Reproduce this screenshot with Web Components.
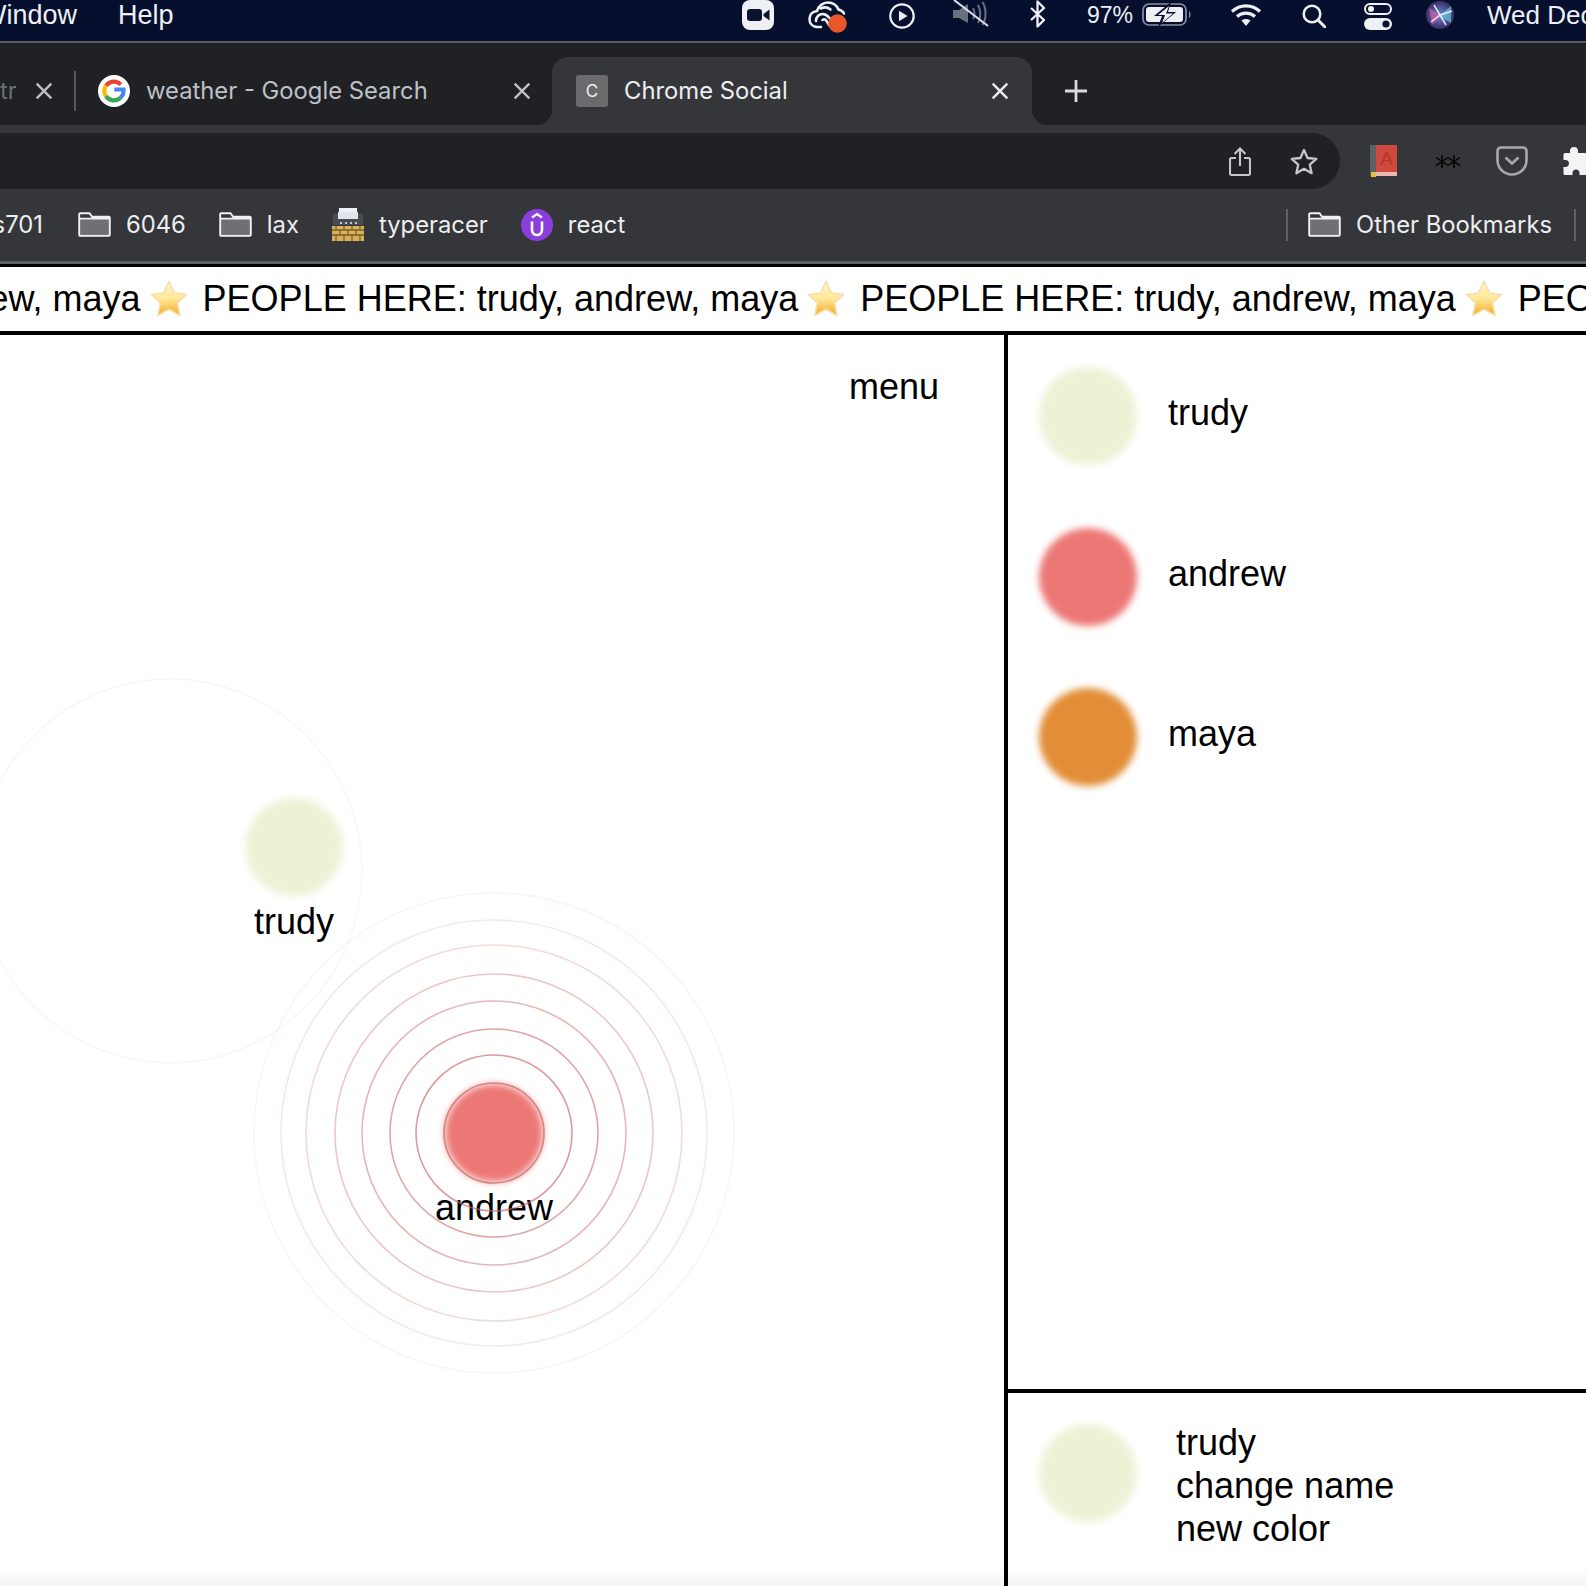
<!DOCTYPE html>
<html>
<head>
<meta charset="utf-8">
<title>Chrome Social</title>
<style>
  html, body { margin: 0; padding: 0; background: #fff; }
  body { width: 1586px; height: 1586px; overflow: hidden; font-family: "Liberation Sans", Arial, sans-serif; }
</style>
</head>
<body>
<mac-menubar></mac-menubar>
<tab-strip></tab-strip>
<browser-toolbar></browser-toolbar>
<bookmark-bar></bookmark-bar>
<people-ticker names="trudy, andrew, maya"></people-ticker>
<social-stage>
  <room-canvas slot="room">
    <room-person name="trudy" color="#edf2d6" x="294" y="512" ring-x="-124" ring-y="24" ring-r="192"></room-person>
    <room-person name="andrew" color="#ec7875" x="494" y="798" pulse></room-person>
  </room-canvas>
  <person-row slot="list" name="trudy" color="#edf2d6"></person-row>
  <person-row slot="list" name="andrew" color="#ec7875"></person-row>
  <person-row slot="list" name="maya" color="#e28e37"></person-row>
  <self-panel slot="self" name="trudy" color="#edf2d6"></self-panel>
</social-stage>

<script>
const UI_FONT = '"Inter", "Liberation Sans", sans-serif';

const folderIcon = `<svg width="33" height="25" viewBox="0 0 33 25"><path d="M2 7h29v15.500H2z" fill="#6f7073"/><path d="M1.200 2.200a1 1 0 0 1 1-1h9.300l2.600 3.600h16.700a1 1 0 0 1 1 1v17a1 1 0 0 1-1 1H2.200a1 1 0 0 1-1-1zM1.200 6.600h30.600" fill="none" stroke="#f1f1f1" stroke-width="1.900"/></svg>`;

const starEmoji = (id) => `<svg width="42" height="42" viewBox="0 0 38 38"><defs><linearGradient id="${id}" x1="0" y1="0" x2="0" y2="1"><stop offset="0" stop-color="#fff6c4"/><stop offset=".5" stop-color="#ffe99a"/><stop offset="1" stop-color="#f6a821"/></linearGradient></defs><path d="M19 3l4.800 10.500 11.200 1.400-8.300 7.700 2.300 11.300L19 28.300 8.900 33.900l2.300-11.300L3 14.900l11.200-1.400z" fill="url(#${id})" stroke="#f5dfae" stroke-width="1.400" stroke-linejoin="round"/></svg>`;

const closeIcon = (cls) => `<svg class="${cls}" width="18" height="18" viewBox="0 0 16 16"><path d="M1.500 1.500l13 13M14.500 1.500l-13 13" stroke="currentColor" stroke-width="2.100"/></svg>`;

// rounded disc with the soft edge every avatar has in the app
class ColorDot extends HTMLElement {
  constructor() {
    super();
    this.attachShadow({ mode: 'open' }).innerHTML = `
      <style>
        :host { display: block; width: 100px; height: 100px; flex: none; }
        .dot { width: 98px; height: 98px; margin: 1px; border-radius: 50%; filter: blur(3.500px); background: var(--dot, #ccc); }
      </style>
      <div class="dot"></div>`;
  }
  connectedCallback() {
    this.style.setProperty('--dot', this.getAttribute('color'));
  }
}
customElements.define('color-dot', ColorDot);

class MacMenubar extends HTMLElement {
  constructor() {
    super();
    this.attachShadow({ mode: 'open' }).innerHTML = `
      <style>
        :host { display: flex; align-items: flex-start; height: 41px; background: #060f2e; color: #eef0f6; overflow: hidden; font: 27px/30px "Liberation Sans", sans-serif; }
        .menu { margin-left: -19px; flex: none; }
        .help { margin-left: 41px; flex: none; }
        .status { margin-left: auto; display: flex; align-items: flex-start; flex: none; }
        svg { display: block; flex: none; }
        .pct { width: 45px; margin-left: 41px; font-size: 23px; line-height: 30px; flex: none; white-space: nowrap; }
        .date { width: 99px; margin-left: 33px; overflow: hidden; white-space: nowrap; flex: none; font-size: 26px; }
      </style>
      <div class="menu">Window</div>
      <div class="help">Help</div>
      <div class="status">
        <svg width="32" height="31" viewBox="0 0 32 31"><rect width="32" height="30" y="0" rx="8" fill="#eef0f4"/><rect x="5" y="9" width="15" height="12" rx="3" fill="#0b1230"/><path d="M21.500 14l6-4.500v11l-6-4.500z" fill="#0b1230"/></svg>
        <svg style="margin-left:34px" width="40" height="33" viewBox="0 0 40 33"><path d="M13 27H9.500C4.500 27 1.500 23.500 1.500 19c0-4.500 3.200-7.500 7.500-8 1.500-5 6-8.500 11-8.500 4.500 0 8.500 2.500 10.500 7 2.500.5 4.500 2 5.500 4M8 21c0-4 3-7 6.500-7 3 0 5 1.500 7 4l4 5M14.500 20c1.500-1 3-.5 4 1l3 4.500M13 8.500c3-1.500 7-1 9.500 1" fill="none" stroke="#eef0f4" stroke-width="2.600" stroke-linecap="round"/><circle cx="29.500" cy="23.500" r="9.300" fill="#e9562a"/></svg>
        <svg style="margin-left:41px;margin-top:3px" width="26" height="26" viewBox="0 0 26 26"><circle cx="13" cy="13" r="11.700" fill="none" stroke="#eef0f4" stroke-width="2.200"/><path d="M10 7.800l8.500 5.200-8.500 5.200z" fill="#eef0f4"/></svg>
        <svg style="margin-left:37px" width="38" height="28" viewBox="0 0 38 28"><path d="M1 10h6l9-6v19l-9-5H1z" fill="#6b7080"/><path d="M21 8c2 3 2 8 0 11M26 5c3 5 3 13 0 18M30.500 2c4 6 4 17 0 23" fill="none" stroke="#6b7080" stroke-width="2"/><path d="M2 0l34 26" stroke="#d8dae2" stroke-width="2.200"/></svg>
        <svg style="margin-left:39px" width="17" height="28" viewBox="0 0 17 28"><path d="M2 8l13 12-6.500 6.500V1.500L15 8 2 20" fill="none" stroke="#eef0f4" stroke-width="2.300" stroke-linejoin="round"/></svg>
        <div class="pct">97%</div>
        <svg style="margin-left:10px;margin-top:3px" width="50" height="24" viewBox="0 0 50 24"><rect x="1" y="1" width="43" height="21" rx="6" fill="none" stroke="#8b8fa3" stroke-width="1.700"/><rect x="4" y="4" width="37" height="15" rx="3" fill="#eef0f4"/><path d="M47 8c2 1 2 6 0 7z" fill="#8b8fa3"/><path d="M29 -1L12 13h8l-4 11 18-15h-8z" fill="#060f2e"/><path d="M27 3L16 12h7l-3 8 11-9.500h-7z" fill="#eef0f4"/></svg>
        <svg style="margin-left:38px;margin-top:3px" width="32" height="24" viewBox="0 0 32 24"><path d="M2 8.500c8-7.500 20-7.500 28 0M7 13.500c5-4.500 13-4.500 18 0" fill="none" stroke="#eef0f4" stroke-width="3.200"/><path d="M11.500 17.500c2.500-2 6.500-2 9 0L16 23z" fill="#eef0f4"/></svg>
        <svg style="margin-left:40px;margin-top:4px" width="24" height="24" viewBox="0 0 24 24"><circle cx="10" cy="10" r="8.300" fill="none" stroke="#eef0f4" stroke-width="2.500"/><path d="M16 16l7 7" stroke="#eef0f4" stroke-width="3" stroke-linecap="round"/></svg>
        <svg style="margin-left:38px;margin-top:3px" width="28" height="27" viewBox="0 0 28 27"><rect x="1" y="1" width="26" height="10" rx="5" fill="none" stroke="#eef0f4" stroke-width="2"/><circle cx="7" cy="6" r="3" fill="#eef0f4"/><rect y="15" width="28" height="12" rx="6" fill="#eef0f4"/><circle cx="22" cy="21" r="3.600" fill="#0b1230"/></svg>
        <svg style="margin-left:34px;margin-top:1px" width="28" height="28" viewBox="0 0 28 28"><defs><radialGradient id="siri"><stop offset="0" stop-color="#6a86d8"/><stop offset="1" stop-color="#3b2f66"/></radialGradient></defs><circle cx="14" cy="14" r="14" fill="url(#siri)"/><path d="M3 7l12 8-9 9z" fill="#d35fa8" opacity=".7"/><path d="M25 5L13 15l12 7z" fill="#5fc8e0" opacity=".7"/><path d="M14 14L8 4M14 14l12-4M14 14L5 21M14 14l6 10" stroke="#fff" stroke-width="1.500" opacity=".85"/></svg>
        <div class="date">Wed Dec</div>
      </div>`;
  }
}
customElements.define('mac-menubar', MacMenubar);

class BrowserTab extends HTMLElement {
  constructor() {
    super();
    this.attachShadow({ mode: 'open' }).innerHTML = `
      <style>
        :host { display: flex; align-items: center; box-sizing: border-box; height: 68px; padding-left: 22px; flex: none; position: relative; color: #bdc1c6; font: 23.800px/32px ${UI_FONT}; }
        :host([active]) { background: #35363a; border-radius: 16px 16px 0 0; color: #eceef0; padding-left: 24px; }
        :host([active])::before, :host([active])::after { content: ""; position: absolute; bottom: 0; width: 16px; height: 16px; }
        :host([active])::before { left: -16px; background: radial-gradient(circle at 0 0, transparent 16px, #35363a 16.500px); }
        :host([active])::after { right: -16px; background: radial-gradient(circle at 100% 0, transparent 16px, #35363a 16.500px); }
        .title { flex: 1; margin-left: 16px; white-space: nowrap; overflow: hidden; min-width: 0; }
        svg.close { flex: none; margin-right: 21px; }
        :host([active]) svg.close { margin-right: 23px; }
      </style>
      <slot name="icon"></slot>
      <div class="title"><slot></slot></div>
      ${closeIcon('close')}`;
  }
}
customElements.define('browser-tab', BrowserTab);

class TabStrip extends HTMLElement {
  constructor() {
    super();
    this.attachShadow({ mode: 'open' }).innerHTML = `
      <style>
        :host { display: flex; align-items: flex-end; box-sizing: border-box; height: 84px; background: #202124; border-top: 2px solid #5c5d60; overflow: hidden; }
        .stub { width: 75px; height: 68px; flex: none; display: flex; align-items: center; color: #bdc1c6; font: 23.800px/32px ${UI_FONT}; }
        .stub span { width: 16px; overflow: hidden; color: #6c6e72; flex: none; }
        .stub svg { margin-left: 19px; flex: none; }
        .sep { width: 2px; height: 40px; background: #55565a; flex: none; margin: 0 0 14px -1px; }
        .plus { margin: 0 0 22px 32px; flex: none; }
        browser-tab.one { width: 476px; }
        browser-tab.two { width: 480px; }
        .fav { width: 32px; height: 32px; flex: none; display: block; }
        .c { width: 32px; height: 32px; background: #6a6a6d; border-radius: 3px; color: #eee; font: 17px/32px ${UI_FONT}; text-align: center; flex: none; }
      </style>
      <div class="stub"><span>tr</span>${closeIcon('')}</div>
      <div class="sep"></div>
      <browser-tab class="one">
        <svg slot="icon" class="fav" viewBox="0 0 32 32">
          <circle cx="16" cy="16" r="16" fill="#fff"/>
          <g fill="none" stroke-width="4.200">
            <path d="M22.800 9.600A9.600 9.600 0 0 0 8 10.700" stroke="#ea4335"/>
            <path d="M8 10.700a9.600 9.600 0 0 0 0 10.600" stroke="#fbbc05"/>
            <path d="M8 21.300a9.600 9.600 0 0 0 14.500 1.400" stroke="#34a853"/>
            <path d="M22.500 22.700a9.600 9.600 0 0 0 3-8.200H16.300" stroke="#4285f4"/>
          </g>
        </svg>
        weather - Google Search
      </browser-tab>
      <browser-tab class="two" active>
        <div slot="icon" class="c">C</div>
        Chrome Social
      </browser-tab>
      <svg class="plus" width="24" height="24" viewBox="0 0 24 24"><path d="M12 1v22M1 12h22" stroke="#d8dade" stroke-width="2.800"/></svg>`;
  }
}
customElements.define('tab-strip', TabStrip);

class BrowserToolbar extends HTMLElement {
  constructor() {
    super();
    this.attachShadow({ mode: 'open' }).innerHTML = `
      <style>
        :host { display: flex; align-items: center; box-sizing: border-box; height: 65px; padding: 8px 0 1px; background: #35363a; overflow: hidden; }
        .omni { width: 1340px; height: 56px; flex: none; box-sizing: border-box; padding: 1px 22px 0 0; background: #202124; border-radius: 0 28px 28px 0; display: flex; align-items: center; justify-content: flex-end; gap: 39px; }
        svg { display: block; flex: none; }
      </style>
      <div class="omni">
        <svg width="22" height="30" viewBox="0 0 22 30"><path d="M7 11H2.500a1.500 1.500 0 0 0-1.500 1.500v14A1.500 1.500 0 0 0 2.500 28h17a1.500 1.500 0 0 0 1.500-1.500v-14a1.500 1.500 0 0 0-1.500-1.500H15M11 19V2M5.500 7L11 1.500 16.500 7" fill="none" stroke="#c4c7cb" stroke-width="2.100"/></svg>
        <svg width="28" height="28" viewBox="0 0 28 28"><path d="M14 2l3.600 8 8.700.9-6.500 5.800 1.800 8.500-7.600-4.400-7.600 4.400 1.800-8.500L1.700 10.900l8.700-.9z" fill="none" stroke="#c4c7cb" stroke-width="2.300" stroke-linejoin="round"/></svg>
      </div>
      <svg style="margin-left:30px" width="27" height="33" viewBox="0 0 27 33"><rect width="27" height="30" fill="#cf4a3e"/><rect width="6" height="30" fill="#5c5f66"/><rect x="6" y="27" width="21" height="4" fill="#e8b9ae"/><rect x="1" y="27" width="5" height="5" fill="#e6c23c"/><text x="16.500" y="20" text-anchor="middle" font-family="Liberation Sans" font-size="19" fill="#b8332c">A</text></svg>
      <svg style="margin-left:38px" width="26" height="15" viewBox="0 0 26 15"><path d="M7 1v13M1 3.500l12 8M13 3.500l-12 8M19 1v13M13 3.500l12 8M25 3.500l-12 8" stroke="#000" stroke-width="1.500"/></svg>
      <svg style="margin-left:35px" width="32" height="30" viewBox="0 0 32 30"><path d="M5 1.500h22A3.500 3.500 0 0 1 30.500 5v9c0 8.500-6.500 14.500-14.500 14.500S1.500 22.500 1.500 14V5A3.500 3.500 0 0 1 5 1.500z" fill="none" stroke="#a6a9ad" stroke-width="2.600"/><path d="M9.500 11.500L16 17.500l6.500-6" fill="none" stroke="#a6a9ad" stroke-width="2.600"/></svg>
      <svg style="margin-left:35px" width="30" height="30" viewBox="0 0 30 30"><path d="M11 1c2.500 0 4 1.800 4 3.500V7h7a1.500 1.500 0 0 1 1.500 1.500V14h2c2.500 0 4 1.600 4 3.500S29 21 26.500 21h-3v6.500A1.500 1.500 0 0 1 22 29h-5.500v-2c0-2-1.500-3.500-3.500-3.500S9.500 25 9.500 27v2H2a1.500 1.500 0 0 1-1.500-1.500V21h2c2.200 0 3.500-1.800 3.500-3.500S4.700 14 2.500 14h-2V8.500A1.500 1.500 0 0 1 2 7h5V4.500C7 2.800 8.500 1 11 1z" fill="#f4f4f4"/></svg>`;
  }
}
customElements.define('browser-toolbar', BrowserToolbar);

class BookMark extends HTMLElement {
  constructor() {
    super();
    this.attachShadow({ mode: 'open' }).innerHTML = `
      <style>
        :host { display: flex; align-items: center; gap: 15px; flex: none; color: #eceef0; font: 23.800px/32px ${UI_FONT}; white-space: nowrap; }
        ::slotted(svg) { display: block; flex: none; }
        ::slotted(span) { display: block; height: 25px; flex: none; }
      </style>
      <slot name="icon"></slot><slot></slot>`;
  }
}
customElements.define('book-mark', BookMark);

class BookmarkBar extends HTMLElement {
  constructor() {
    super();
    this.attachShadow({ mode: 'open' }).innerHTML = `
      <style>
        :host { display: flex; align-items: center; box-sizing: border-box; height: 74px; padding-bottom: 2px; background: #35363a; border-bottom: 3px solid #5f6063; overflow: hidden; gap: 33px; }
        .first { margin-left: -21px; margin-right: 2px; }
        .sep { width: 2px; height: 32px; background: #5f6063; flex: none; }
        .end { margin-left: auto; display: flex; align-items: center; gap: 20px; margin-right: 10px; flex: none; }
        .end book-mark { margin-right: 2px; }
      </style>
      <book-mark class="first">cs701</book-mark>
      <book-mark><span slot="icon">${folderIcon}</span>6046</book-mark>
      <book-mark><span slot="icon">${folderIcon}</span>lax</book-mark>
      <book-mark>
        <svg slot="icon" width="32" height="34" viewBox="0 0 32 34">
          <rect x="7" y="0" width="18" height="9" fill="#eef1f6"/>
          <rect x="1" y="6" width="30" height="11" fill="#4a4b52"/>
          <rect x="6" y="4" width="20" height="7" fill="#dfe3ea"/>
          <path d="M8 14h2v2H8zM13 14h2v2h-2zM18 14h2v2h-2zM23 14h2v2h-2z" fill="#c9c9c9"/>
          <rect x="0" y="18" width="32" height="15" fill="#d8b25a"/>
          <path d="M0 22h32M0 27h32M4 18v4M12 18v4M20 18v4M28 18v4M8 22v5M16 22v5M24 22v5M4 27v6M12 27v6M20 27v6M28 27v6" stroke="#7a5f25" stroke-width="1.300"/>
        </svg>
        typeracer
      </book-mark>
      <book-mark>
        <svg slot="icon" width="32" height="32" viewBox="0 0 32 32"><circle cx="16" cy="16" r="16" fill="#8a3fdc"/><path d="M11 8.500l5-3.500 5 3.500" fill="none" stroke="#fff" stroke-width="2.200"/><path d="M11 12.500V21a5 5 0 0 0 10 0v-8.500" fill="none" stroke="#fff" stroke-width="2.600"/></svg>
        react
      </book-mark>
      <div class="end">
        <div class="sep"></div>
        <book-mark><span slot="icon">${folderIcon}</span>Other Bookmarks</book-mark>
        <div class="sep"></div>
      </div>`;
  }
}
customElements.define('bookmark-bar', BookmarkBar);

class PeopleTicker extends HTMLElement {
  constructor() {
    super();
    this.attachShadow({ mode: 'open' });
  }
  connectedCallback() {
    const line = `PEOPLE HERE: ${this.getAttribute('names')}`;
    let chunks = '';
    for (let i = 0; i < 4; i++) {
      chunks += `<span class="txt">${line}</span><span class="star">${starEmoji('st' + i)}</span>`;
    }
    this.shadowRoot.innerHTML = `
      <style>
        :host { display: flex; align-items: center; box-sizing: content-box; height: 64px; background: #fff; color: #000; border-top: 3px solid #000; border-bottom: 4px solid #000; overflow: hidden; white-space: nowrap; font: 36px/40px "Liberation Sans", sans-serif; }
        .run { display: flex; align-items: center; margin-left: -455px; flex: none; }
        .txt { flex: none; margin-bottom: 1px; }
        .star { flex: none; margin: 0 13px 0 7px; display: block; height: 42px; }
      </style>
      <div class="run">${chunks}</div>`;
  }
}
customElements.define('people-ticker', PeopleTicker);

class SocialStage extends HTMLElement {
  constructor() {
    super();
    this.attachShadow({ mode: 'open' }).innerHTML = `
      <style>
        :host { display: grid; grid-template-columns: 1004px 1fr; height: 1251px; color: #000; font: 36px/40px "Liberation Sans", sans-serif; background: linear-gradient(#fff 1232px, #f5f5f5 1251px); overflow: hidden; }
        .side { border-left: 4px solid #000; display: grid; grid-template-rows: 1054px 1fr; min-width: 0; }
        .list { padding-top: 1px; box-sizing: border-box; }
        .self { border-top: 4px solid #000; }
      </style>
      <slot name="room"></slot>
      <div class="side">
        <div class="list"><slot name="list"></slot></div>
        <div class="self"><slot name="self"></slot></div>
      </div>`;
  }
}
customElements.define('social-stage', SocialStage);

class RoomCanvas extends HTMLElement {
  constructor() {
    super();
    this.attachShadow({ mode: 'open' }).innerHTML = `
      <style>
        :host { display: block; position: relative; overflow: hidden; }
        .top { display: flex; justify-content: flex-end; padding: 32px 65px 0 0; position: relative; z-index: 3; }
      </style>
      <div class="top">menu</div>
      <slot></slot>`;
  }
}
customElements.define('room-canvas', RoomCanvas);

// a person on the free canvas: disc, label and the sound rings round them
class RoomPerson extends HTMLElement {
  constructor() {
    super();
    this.attachShadow({ mode: 'open' });
  }
  connectedCallback() {
    const color = this.getAttribute('color');
    let rings = '';
    if (this.hasAttribute('pulse')) {
      const steps = [[50, .7], [78, .65], [104, .58], [132, .47], [159, .36], [188, .24], [213, .15], [240, .07]];
      rings = steps.map(([r, a]) => `<circle cx="250" cy="250" r="${r}" fill="none" stroke="rgb(203,100,100)" stroke-opacity="${a}" stroke-width="1.600"/>`).join('');
    }
    if (this.hasAttribute('ring-r')) {
      const cx = 250 + Number(this.getAttribute('ring-x'));
      const cy = 250 + Number(this.getAttribute('ring-y'));
      rings += `<circle cx="${cx}" cy="${cy}" r="${this.getAttribute('ring-r')}" fill="none" stroke="#faf6f4" stroke-width="1.500"/>`;
    }
    this.shadowRoot.innerHTML = `
      <style>
        :host { position: absolute; left: ${this.getAttribute('x')}px; top: ${this.getAttribute('y')}px; width: 0; height: 0; }
        svg { position: absolute; left: -250px; top: -250px; overflow: visible; }
        color-dot { position: absolute; left: -50px; top: -50px; }
        .name { position: absolute; left: -100px; width: 200px; top: 55px; text-align: center; }
      </style>
      <color-dot color="${color}"></color-dot>
      <div class="name">${this.getAttribute('name')}</div>
      <svg width="500" height="500" viewBox="0 0 500 500">${rings}</svg>`;
  }
}
customElements.define('room-person', RoomPerson);

class PersonRow extends HTMLElement {
  constructor() {
    super();
    this.attachShadow({ mode: 'open' });
  }
  connectedCallback() {
    this.shadowRoot.innerHTML = `
      <style>
        :host { display: flex; align-items: center; height: 160.500px; padding-left: 30px; }
        .name { margin: 0 0 6px 30px; }
      </style>
      <color-dot color="${this.getAttribute('color')}"></color-dot>
      <div class="name">${this.getAttribute('name')}</div>`;
  }
}
customElements.define('person-row', PersonRow);

class SelfPanel extends HTMLElement {
  constructor() {
    super();
    this.attachShadow({ mode: 'open' });
  }
  connectedCallback() {
    this.shadowRoot.innerHTML = `
      <style>
        :host { display: flex; align-items: flex-start; padding: 28px 0 0 30px; }
        color-dot { margin-top: 2px; }
        .info { margin-left: 38px; line-height: 43px; }
      </style>
      <color-dot color="${this.getAttribute('color')}"></color-dot>
      <div class="info">
        <div>${this.getAttribute('name')}</div>
        <div>change name</div>
        <div>new color</div>
      </div>`;
  }
}
customElements.define('self-panel', SelfPanel);
</script>
</body>
</html>
